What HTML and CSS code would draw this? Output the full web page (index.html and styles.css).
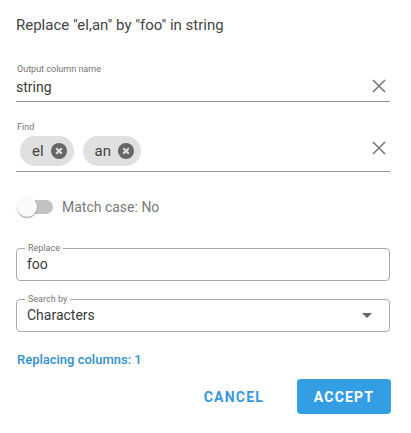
FILE: index.html
```html
<!DOCTYPE html>
<html>
<head>
<meta charset="utf-8">
<link rel="stylesheet" href="styles.css">
</head>
<body>
<div class="dialog">
  <h1 class="title">Replace "el,an" by "foo" in string</h1>

  <div class="line-field output-field">
    <div class="small-label">Output column name</div>
    <div class="line-row">
      <span class="value">string</span>
      <svg class="clear" width="14" height="14" viewBox="0 0 14 14"><path d="M1 1 L13 13 M13 1 L1 13" stroke="#727272" stroke-width="1.5" fill="none"/></svg>
    </div>
  </div>

  <div class="line-field find-field">
    <div class="small-label">Find</div>
    <div class="line-row chips-row">
      <div class="chips">
        <span class="chip"><span class="chip-text">el</span><svg class="chip-del" width="16" height="16" viewBox="0 0 16 16"><circle cx="8" cy="8" r="8" fill="#666"/><path d="M5.2 5.2 L10.8 10.8 M10.8 5.2 L5.2 10.8" stroke="#e0e0e0" stroke-width="2" fill="none"/></svg></span>
        <span class="chip"><span class="chip-text">an</span><svg class="chip-del" width="16" height="16" viewBox="0 0 16 16"><circle cx="8" cy="8" r="8" fill="#666"/><path d="M5.2 5.2 L10.8 10.8 M10.8 5.2 L5.2 10.8" stroke="#e0e0e0" stroke-width="2" fill="none"/></svg></span>
      </div>
      <svg class="clear clear-find" width="14" height="14" viewBox="0 0 14 14"><path d="M1 1 L13 13 M13 1 L1 13" stroke="#727272" stroke-width="1.5" fill="none"/></svg>
    </div>
  </div>

  <div class="toggle-row">
    <span class="switch"><span class="track"></span><span class="thumb"></span></span>
    <span class="toggle-label">Match case: No</span>
  </div>

  <fieldset class="outlined replace-field">
    <legend>Replace</legend>
    <div class="outlined-value">foo</div>
  </fieldset>

  <fieldset class="outlined search-field">
    <legend>Search by</legend>
    <div class="outlined-value select-value">
      <span>Characters</span>
      <svg class="arrow" width="10" height="5" viewBox="0 0 10 5"><path d="M0 0 L10 0 L5 5 Z" fill="#666"/></svg>
    </div>
  </fieldset>

  <div class="info">Replacing columns: 1</div>

  <div class="actions">
    <button class="btn btn-text">CANCEL</button>
    <button class="btn btn-primary">ACCEPT</button>
  </div>
</div>
</body>
</html>
```

FILE: styles.css
```css
html, body {
  margin: 0;
  padding: 0;
  background: #ffffff;
}

body {
  font-family: Roboto, "Liberation Sans", Arial, sans-serif;
  color: #3a3a3a;
}

.dialog {
  width: 374px;
  margin-left: 16px;
  padding-top: 15px;
}

.title {
  margin: 0;
  font-size: 15px;
  line-height: 20px;
  font-weight: 400;
  color: #444444;
}

.small-label {
  font-size: 9px;
  line-height: 11px;
  color: #757575;
  padding-left: 1px;
}

.line-field {
  border-bottom: 1px solid #8f8f8f;
}

.output-field {
  margin-top: 29px;
  padding-bottom: 4px;
}

.line-row {
  display: flex;
  align-items: center;
  justify-content: space-between;
  margin-top: 2px;
  height: 20px;
}

.value {
  font-size: 14px;
  line-height: 20px;
  color: #3a3a3a;
}

.clear {
  margin-right: 4px;
  margin-bottom: 3px;
}

.find-field {
  margin-top: 20px;
  padding-bottom: 5px;
}

.chips-row {
  height: 30px;
  margin-top: 3px;
}

.chips {
  display: flex;
  gap: 9px;
  padding-left: 4px;
}

.chip {
  display: inline-flex;
  align-items: center;
  height: 30px;
  border-radius: 15px;
  background: #e0e0e0;
  padding: 0 7px 0 12px;
}

.chip-text {
  font-size: 15px;
  color: #444;
  margin-right: 7px;
}

.clear-find {
  margin-bottom: 6px;
}

.toggle-row {
  display: flex;
  align-items: center;
  height: 20px;
  margin-top: 25px;
}

.switch {
  position: relative;
  width: 36px;
  height: 20px;
  margin-left: 1px;
  display: inline-block;
}

.track {
  position: absolute;
  left: 2px;
  top: 3px;
  width: 34px;
  height: 14px;
  border-radius: 7px;
  background: #c2c2c2;
}

.thumb {
  position: absolute;
  left: 0;
  top: 0;
  width: 20px;
  height: 20px;
  border-radius: 50%;
  background: #fafafa;
  box-shadow: 0 2px 1px -1px rgba(0,0,0,0.2), 0 1px 1px 0 rgba(0,0,0,0.14), 0 1px 3px 0 rgba(0,0,0,0.12);
}

.toggle-label {
  margin-left: 9px;
  font-size: 14px;
  color: #7a7a7a;
}

.outlined {
  margin: 0;
  border: 1px solid #a9a9a9;
  border-radius: 4px;
  padding: 0 10px 6px 10px;
  min-width: 0;
}

.outlined legend {
  font-size: 9px;
  line-height: 11px;
  color: #757575;
  padding: 0 3px;
  margin-left: -2px;
}

.replace-field {
  margin-top: 26px;
}

.search-field {
  margin-top: 13px;
}

.outlined-value {
  font-size: 14px;
  line-height: 20px;
  color: #3a3a3a;
}

.select-value {
  display: flex;
  align-items: center;
  justify-content: space-between;
}

.arrow {
  margin-right: 7px;
}

.info {
  margin-top: 20px;
  font-size: 13px;
  line-height: 16px;
  font-weight: 500;
  color: #2f8fd3;
  padding-left: 1px;
}

.actions {
  display: flex;
  justify-content: flex-end;
  align-items: center;
  gap: 25px;
  margin-top: 11px;
  margin-right: -1px;
}

.btn {
  font-family: Roboto, "Liberation Sans", Arial, sans-serif;
  font-size: 14px;
  font-weight: 700;
  letter-spacing: 1.2px;
  border: none;
  cursor: pointer;
  height: 35px;
}

.btn-text {
  background: transparent;
  color: #3799dc;
  padding: 0 8px;
}

.btn-primary {
  background: #339ee3;
  color: #ffffff;
  width: 94px;
  border-radius: 4px;
  padding: 0;
}
```
